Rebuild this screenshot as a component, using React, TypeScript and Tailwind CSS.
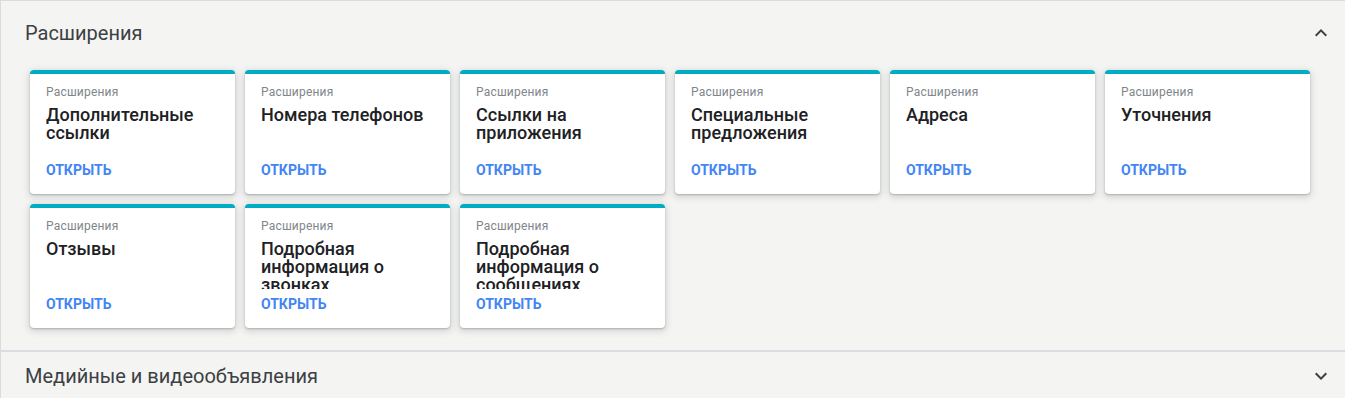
const cards = [
  'Дополнительные ссылки',
  'Номера телефонов',
  'Ссылки на приложения',
  'Специальные предложения',
  'Адреса',
  'Уточнения',
  'Отзывы',
  'Подробная информация о звонках',
  'Подробная информация о сообщениях',
]

function ChevronUp() {
  return (
    <svg width="24" height="24" viewBox="0 0 24 24" className="fill-[#3c4043]">
      <path d="M12 8l-6 6 1.41 1.41L12 10.83l4.59 4.58L18 14z" />
    </svg>
  )
}

function ChevronDown() {
  return (
    <svg width="24" height="24" viewBox="0 0 24 24" className="fill-[#3c4043]">
      <path d="M16.59 8.59L12 13.17 7.41 8.59 6 10l6 6 6-6z" />
    </svg>
  )
}

function ExtensionCard({ title }: { title: string }) {
  return (
    <div className="flex h-[124px] flex-col rounded-[4px] border-t-4 border-[#00acc1] bg-white px-4 pt-[10px] shadow-[0_1px_2px_0_rgba(60,64,67,0.3),0_2px_6px_2px_rgba(60,64,67,0.15)]">
      <div className="h-4 text-xs leading-4 tracking-[0.2px] text-[#80868b]">Расширения</div>
      {/* title is clipped part way through the 3rd line, like the original */}
      <div className="mt-[6px] h-[49px] overflow-hidden text-[18px] font-medium leading-[18px] text-[#202124]">
        {title}
      </div>
      <div className="mt-[5px] text-sm font-bold uppercase leading-5 text-[#4285f4]">Открыть</div>
    </div>
  )
}

export default function App() {
  return (
    <div className="h-[398px] w-full overflow-hidden border-l border-t border-[#dadce0] bg-[#f4f5f3] font-['Roboto',sans-serif]">
      {/* Expanded section */}
      <section className="pb-[22px]">
        <div className="flex h-[63px] items-center justify-between pl-6 pr-3">
          <h2 className="text-xl text-[#3c4043]">Расширения</h2>
          <ChevronUp />
        </div>
        <div className="mt-[6px] grid grid-cols-[repeat(6,205px)] gap-[10px] pl-[29px]">
          {cards.map((title) => (
            <ExtensionCard key={title} title={title} />
          ))}
        </div>
      </section>

      {/* Collapsed section */}
      <section className="border-t-2 border-[#dadce0]">
        <div className="flex h-[48px] items-center justify-between pl-6 pr-3">
          <h2 className="text-xl text-[#3c4043]">Медийные и видеообъявления</h2>
          <ChevronDown />
        </div>
      </section>
    </div>
  )
}
